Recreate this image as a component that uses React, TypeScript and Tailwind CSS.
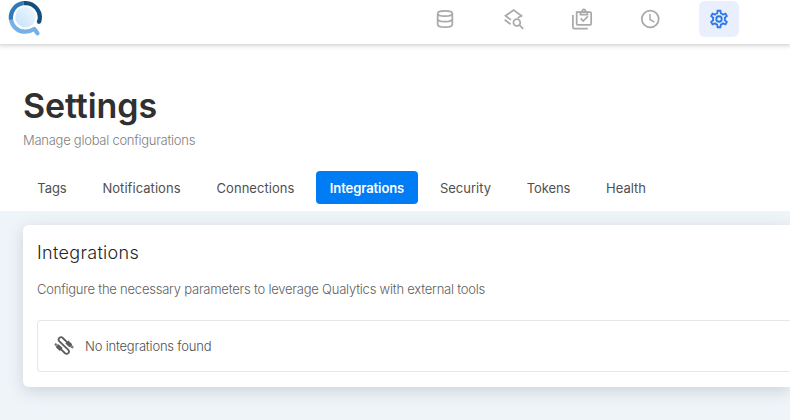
import type { ReactNode } from "react";

const tabs = [
  { name: "Tags", style: "w-[58px] tracking-[-0.05px]" },
  { name: "Notifications", style: "w-[107px] tracking-[0.05px]" },
  { name: "Connections", style: "w-[107px] tracking-[0.05px]" },
  { name: "Integrations", style: "w-[102px] tracking-[-0.08px]" },
  { name: "Security", style: "w-[81px] tracking-[0px]" },
  { name: "Tokens", style: "w-[71px] tracking-[-0.1px]" },
  { name: "Health", style: "w-[70px] tracking-[0px]" },
];

function NavIcon({ children, active = false }: { children: ReactNode; active?: boolean }) {
  return (
    <button
      className={`flex h-9 w-[39.5px] items-center justify-center rounded-md ${
        active ? "bg-[#e9effc] text-[#2f78ea]" : "text-[#a9a9a9]"
      }`}
    >
      <svg className="size-[22px]" viewBox="0 0 24 24" fill="none" stroke="currentColor" strokeWidth="1.9">
        {children}
      </svg>
    </button>
  );
}

function Logo() {
  return (
    <svg className="size-10" viewBox="0 0 40 40" fill="none">
      <defs>
        <linearGradient id="lens" x1="0" y1="1" x2="1" y2="0">
          <stop stopColor="#c5e2fb" />
          <stop offset="1" stopColor="#f0f8ff" />
        </linearGradient>
      </defs>
      <circle cx="17.5" cy="17" r="10.3" fill="url(#lens)" />
      <path d="M3 19.3A14.2 14.2 0 0 0 17.5 31.7C21 31.7 24.3 30.3 26.3 28.9L29.5 33.3" stroke="#73b1e6" strokeWidth="4.2" strokeLinejoin="round" strokeLinecap="round" />
      <path d="M3 19.5A14.3 14.3 0 0 1 15.5 3.2" stroke="#3279b7" strokeWidth="4.2" />
      <path d="M15.5 3.2A14.3 14.3 0 0 1 31 22" stroke="#124f7c" strokeWidth="4.2" />
      <circle cx="30.9" cy="21.8" r="2.1" fill="#124f7c" />
    </svg>
  );
}

function CableIcon() {
  return (
    <svg className="size-5" viewBox="0 0 20 20" fill="none" stroke="#5c5c5c" strokeLinecap="butt">
      <path
        d="M5.5 11.8 10.8 17C13.2 19.2 16.5 16.3 14.3 13.9L5.4 5.3C3.1 2.8 6.5-.2 8.8 2L14.5 7.6"
        strokeWidth="1.8"
      />
      <path d="m3.2 9.7 4 3.8M12.8 6l4 3.8" strokeWidth="4.2" />
      <path d="m1 7.8 2.4 2.1M16.6 9.6l2.5 2.2" strokeWidth="2.2" />
      <path d="m1.7 8.4 1 .9M17.5 10.4l1 .9" stroke="#ffffff" strokeWidth="0.8" />
    </svg>
  );
}

export default function App() {
  return (
    <div className="flex h-[420px] w-[790px] flex-col overflow-hidden bg-[#eff4f9] font-['Inter','Liberation_Sans',sans-serif] text-[13px]">
      <header className="z-10 flex h-11 shrink-0 bg-white pl-2 shadow-[0_1px_4px_1px_rgba(0,0,0,0.17)]">
        <Logo />
        <nav className="ml-[377px] flex h-[37px] items-center gap-[29px] pt-[1px]">
          <NavIcon>
            <path d="M4 6c0-1.7 3.6-2.8 8-2.8S20 4.3 20 6s-3.6 2.9-8 2.9S4 7.700 4 6v12c0 1.700 3.600 2.900 8 2.900s8-1.200 8-2.900V6" />
            <path d="M4 12c0 1.700 3.600 2.900 8 2.900s8-1.200 8-2.900" />
          </NavIcon>
          <NavIcon>
            <path d="m20.300 9.700 1-1.100-8.700-6.300-8.800 6.300 6 4.400M3 12.800l6.300 4.900M20.800 8.300l-3.500 2.700" />
            <circle cx="16.200" cy="15.800" r="3.700" />
            <path d="m19 18.600 4.200 4.200" />
          </NavIcon>
          <NavIcon>
            <path d="M6.2 4.5h14.600c.7 0 1.200.5 1.200 1.200v11.600c0 .7-.5 1.200-1.200 1.200H7.400c-.7 0-1.200-.5-1.200-1.200ZM2.100 7.500v13.400c0 .9.6 1.500 1.500 1.500h14.700m-7.800-11 2.800 2.800 5.200-5.200" />
            <path d="M10.300 4.500h7.600v2.700h-7.600ZM12.300 4V3a1.800 1.800 0 0 1 3.500 0v1" />
          </NavIcon>
          <NavIcon>
            <circle cx="12.300" cy="12" r="9.200" />
            <path d="M12 6.500v6l4.800 2.800" strokeWidth="1.600" />
          </NavIcon>
          <NavIcon active>
            <path
              fill="currentColor"
              stroke="none"
              d="M12,8A4,4 0 0,1 16,12A4,4 0 0,1 12,16A4,4 0 0,1 8,12A4,4 0 0,1 12,8M12,10A2,2 0 0,0 10,12A2,2 0 0,0 12,14A2,2 0 0,0 14,12A2,2 0 0,0 12,10M10,22C9.75,22 9.54,21.82 9.5,21.58L9.13,18.93C8.5,18.68 7.96,18.34 7.44,17.94L4.95,18.95C4.73,19.03 4.46,18.95 4.34,18.73L2.34,15.27C2.21,15.05 2.27,14.78 2.46,14.63L4.57,12.97L4.5,12L4.57,11L2.46,9.37C2.27,9.22 2.21,8.95 2.34,8.73L4.34,5.27C4.46,5.05 4.73,4.96 4.95,5.05L7.44,6.05C7.96,5.66 8.5,5.32 9.13,5.07L9.5,2.42C9.54,2.18 9.75,2 10,2H14C14.25,2 14.46,2.18 14.5,2.42L14.87,5.07C15.5,5.32 16.04,5.66 16.56,6.05L19.05,5.05C19.27,4.96 19.54,5.05 19.66,5.27L21.66,8.73C21.79,8.95 21.73,9.22 21.54,9.37L19.43,11L19.5,12L19.43,13L21.54,14.63C21.73,14.78 21.79,15.05 21.66,15.27L19.66,18.73C19.54,18.95 19.27,19.04 19.05,18.95L16.56,17.95C16.04,18.34 15.5,18.68 14.87,18.93L14.5,21.58C14.46,21.82 14.25,22 14,22H10M11.25,4L10.88,6.61C9.68,6.86 8.62,7.5 7.85,8.39L5.44,7.35L4.69,8.65L6.8,10.2C6.4,11.37 6.4,12.64 6.8,13.8L4.68,15.36L5.43,16.66L7.86,15.62C8.63,16.5 9.68,17.14 10.87,17.38L11.24,20H12.76L13.13,17.39C14.32,17.14 15.37,16.5 16.14,15.62L18.57,16.66L19.32,15.36L17.2,13.81C17.6,12.64 17.6,11.37 17.2,10.2L19.31,8.65L18.56,7.35L16.15,8.39C15.38,7.5 14.32,6.86 13.12,6.62L12.75,4H11.25Z"
            />
          </NavIcon>
        </nav>
      </header>

      <section className="flex h-[167px] shrink-0 flex-col bg-white pl-[23px]">
        <h1 className="mt-[42px] h-10 text-[34px] leading-10 font-semibold tracking-[-0.1px] text-[#303030]">Settings</h1>
        <p className="mt-1 h-5 leading-5 font-light tracking-[-0.26px] text-[#808080]">Manage global configurations</p>
        <div className="mt-[21px] flex gap-[7px]">
          {tabs.map((tab) => (
            <button
              key={tab.name}
              className={`h-[33px] rounded-[4px] pt-[3px] whitespace-nowrap ${tab.style} ${
                tab.name === "Integrations" ? "bg-[#007df5] font-semibold text-white" : "text-[#505050]"
              }`}
            >
              {tab.name}
            </button>
          ))}
        </div>
      </section>

      <main className="pt-3.5 pl-[23px]">
        <section className="h-[162px] rounded-l-md bg-white pt-4 pl-3.5 shadow-[0_4px_16px_rgba(50,65,80,0.18)]">
          <h2 className="h-6 text-[18px] leading-6 font-light tracking-[0.32px] text-[#252525]">Integrations</h2>
          <p className="mt-3.5 h-5 leading-5 font-light tracking-[-0.22px] text-[#606060]">
            Configure the necessary parameters to leverage Qualytics with external tools
          </p>
          <div className="mt-[21px] flex h-[52px] items-center rounded-l border border-r-0 border-[#e7e7e7] pl-4 text-[#505050]">
            <CableIcon />
            <span className="ml-[11px] pt-[2px] font-light tracking-[-0.2px]">No integrations found</span>
          </div>
        </section>
      </main>
    </div>
  );
}
